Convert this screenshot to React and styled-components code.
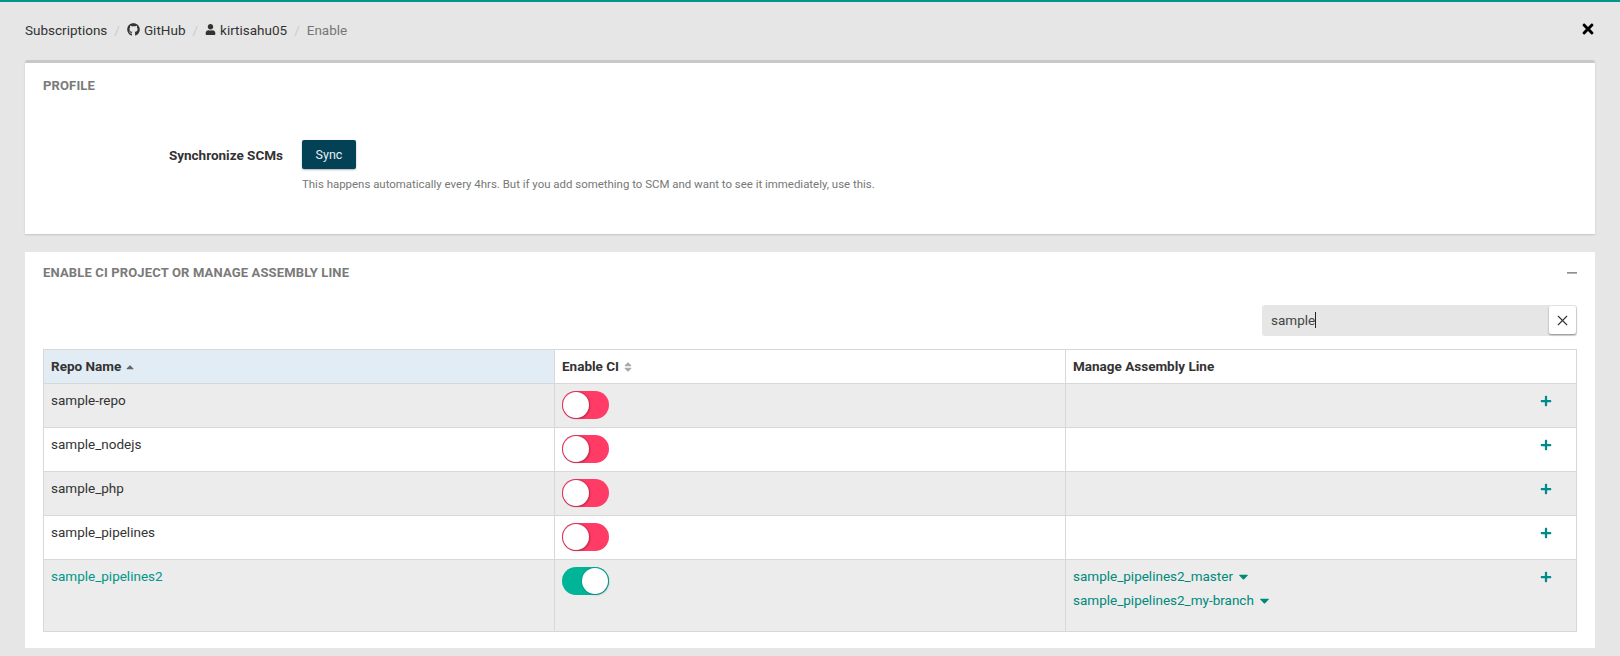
import React from 'react';
import styled, { createGlobalStyle } from 'styled-components';
import { FaGithub, FaUser, FaPlus, FaTimes, FaCaretDown, FaCaretUp, FaSort } from 'react-icons/fa';
import { X } from 'lucide-react';

const GlobalStyle = createGlobalStyle`
  html, body {
    margin: 0;
    padding: 0;
    background: #e6e6e6;
    font-family: Roboto, "Liberation Sans", sans-serif;
    font-size: 13.5px;
    color: #333;
    overflow: hidden;
  }
`;

const Page = styled.div`
  width: 1620px;
  height: 656px;
  box-sizing: border-box;
  border-top: 2px solid #009688;
  padding: 0 25px;
`;

const TopBar = styled.div`
  height: 58px;
  display: flex;
  align-items: center;
  justify-content: space-between;
  padding-bottom: 1px;
  box-sizing: border-box;
`;

const Crumbs = styled.div`
  display: flex;
  align-items: center;
  margin-top: -2px;
`;

const Crumb = styled.span`
  display: inline-flex;
  align-items: center;
  gap: 4px;
  color: ${p => (p.$current ? '#777' : '#333')};
`;

const Slash = styled.span`
  color: #ccc;
  padding: 0 7px;
`;

const GithubIcon = styled(FaGithub)`
  font-size: 13px;
`;

const UserIcon = styled(FaUser)`
  font-size: 11px;
`;

const CloseBtn = styled.span`
  display: flex;
  margin-right: -1px;
  margin-top: -4px;
  font-size: 16px;
  color: #000;
`;

const Card = styled.section`
  background: #fff;
  box-sizing: border-box;
  border-top: ${p => (p.$profile ? '3px solid #c8c8c8' : 'none')};
  border-radius: ${p => (p.$profile ? '3px 3px 0 0' : '0')};
  box-shadow: ${p => (p.$profile ? '0 1px 2px #00000026' : 'none')};
  padding: 0 18px;
  height: ${p => p.$height}px;
  margin-bottom: 18px;
`;

const CardHead = styled.div`
  height: 42px;
  box-sizing: border-box;
  padding-top: ${p => (p.$profile ? '3px' : '0')};
  padding-bottom: ${p => (p.$profile ? '0' : '2px')};
  display: flex;
  align-items: center;
  justify-content: space-between;
`;

const CardTitle = styled.h3`
  margin: 0;
  font-size: 13px;
  font-weight: 700;
  letter-spacing: 0.15px;
  text-transform: uppercase;
  color: #7a7a7a;
`;

const Collapse = styled.span`
  width: 10px;
  height: 1px;
  margin-top: 2px;
  background: #8f8f8f;
  border-bottom: 1px solid #b5b5b5;
`;

const FormRow = styled.div`
  display: grid;
  grid-template-columns: 240px 1fr;
  column-gap: 19px;
  padding-top: 35px;
`;

const FormLabel = styled.label`
  text-align: right;
  font-weight: 700;
  line-height: 31px;
  color: #333;
`;

const SyncButton = styled.button`
  display: block;
  width: 54px;
  height: 29px;
  padding: 0;
  border: none;
  border-radius: 2px;
  background: #024156;
  color: #e8eef0;
  font: 400 12.5px Roboto, sans-serif;
  box-shadow: 0 1px 2px #0000004d;
`;

const Help = styled.p`
  margin: 8px 0 0;
  font-size: 11.45px;
  line-height: 14px;
  color: #777;
`;

const SearchRow = styled.div`
  display: flex;
  justify-content: flex-end;
  margin-top: 11px;
  margin-bottom: 13px;
`;

const SearchBox = styled.div`
  position: relative;
  width: 315px;
  height: 31px;
  box-sizing: border-box;
  background: #e6e6e6;
  border-radius: 3px;
  padding: 0 9px 1px;
  display: flex;
  align-items: center;
  color: #444;
`;

const Caret = styled.span`
  width: 1px;
  height: 16px;
  background: #222;
`;

const ClearBtn = styled.span`
  position: absolute;
  top: 1px;
  right: 1px;
  width: 27px;
  height: 28px;
  background: #fff;
  border-radius: 2px;
  box-shadow: 0 1px 2px #00000066;
  display: flex;
  align-items: center;
  justify-content: center;
  color: #333;
`;

const Table = styled.table`
  width: 1533px;
  table-layout: fixed;
  border-collapse: collapse;
  border: 1.5px solid #d8d8d8;
`;

const Th = styled.th`
  height: 34px;
  box-sizing: border-box;
  padding: 0 7px 2px;
  text-align: left;
  font-weight: 700;
  font-size: 13.5px;
  color: #333;
  background: ${p => (p.$sorted ? '#e1ecf4' : '#fff')};
  border-left: 1.5px solid #d8d8d8;
  svg { font-size: 12px; margin-left: 3px; color: ${p => (p.$sorted ? '#666' : '#aaa')}; vertical-align: -2px; }
`;

const Tr = styled.tr`
  background: ${p => (p.$odd ? '#ececec' : '#fff')};
  border-top: 1.5px solid #d8d8d8;
`;

const Td = styled.td`
  height: ${p => p.$height}px;
  box-sizing: border-box;
  padding: 8px 7px 0;
  vertical-align: top;
  border-left: 1.5px solid #d8d8d8;
  color: ${p => (p.$enabled ? '#009688' : '#333')};
  line-height: 17px;
`;

const Toggle = styled.span`
  position: relative;
  display: block;
  width: 47px;
  height: 28px;
  margin-top: -1px;
  border-radius: 14px;
  background: ${p => (p.$on ? '#00b597' : '#ff3b66')};
  &::after {
    content: '';
    position: absolute;
    top: 1px;
    left: ${p => (p.$on ? '20px' : '1px')};
    width: 26px;
    height: 26px;
    border-radius: 50%;
    background: #fff;
    box-shadow: ${p => (p.$on ? '0 0 0 1px #00968899' : '0 0 0 1px #c2274b80')}, 1px 1px 2px #00000040;
  }
`;

const LineCell = styled.div`
  display: flex;
  justify-content: space-between;
  padding-right: 17px;
`;

const Lines = styled.div`
  display: flex;
  flex-direction: column;
  gap: 7px;
`;

const Line = styled.a`
  color: #00897b;
  display: inline-flex;
  align-items: center;
  gap: 3px;
  svg { font-size: 15px; }
`;

const AddIcon = styled(FaPlus)`
  color: #008a8c;
  font-size: 12px;
  margin-top: 3px;
`;

const repos = [
  { name: 'sample-repo' },
  { name: 'sample_nodejs' },
  { name: 'sample_php' },
  { name: 'sample_pipelines' },
  { name: 'sample_pipelines2', enabled: true, lines: ['sample_pipelines2_master', 'sample_pipelines2_my-branch'] },
];

export default function App() {
  return (
    <>
      <GlobalStyle />
      <Page>
        <TopBar>
          <Crumbs>
            <Crumb>Subscriptions</Crumb>
            <Slash>/</Slash>
            <Crumb><GithubIcon /> GitHub</Crumb>
            <Slash>/</Slash>
            <Crumb><UserIcon /> kirtisahu05</Crumb>
            <Slash>/</Slash>
            <Crumb $current>Enable</Crumb>
          </Crumbs>
          <CloseBtn><FaTimes /></CloseBtn>
        </TopBar>

        <Card $profile $height={174}>
          <CardHead $profile><CardTitle>Profile</CardTitle></CardHead>
          <FormRow>
            <FormLabel>Synchronize SCMs</FormLabel>
            <div>
              <SyncButton>Sync</SyncButton>
              <Help>This happens automatically every 4hrs. But if you add something to SCM and want to see it immediately, use this.</Help>
            </div>
          </FormRow>
        </Card>

        <Card $height={396}>
          <CardHead>
            <CardTitle>Enable CI project or manage assembly line</CardTitle>
            <Collapse />
          </CardHead>
          <SearchRow>
            <SearchBox>
              sample<Caret />
              <ClearBtn><X size={17} strokeWidth={1.6} /></ClearBtn>
            </SearchBox>
          </SearchRow>
          <Table>
            <colgroup>
              <col style={{ width: 511 }} />
              <col style={{ width: 511 }} />
              <col style={{ width: 511 }} />
            </colgroup>
            <thead>
              <tr>
                <Th $sorted>Repo Name<FaCaretUp /></Th>
                <Th>Enable CI<FaSort /></Th>
                <Th>Manage Assembly Line</Th>
              </tr>
            </thead>
            <tbody>
              {repos.map((repo, i) => (
                <Tr key={repo.name} $odd={i % 2 === 0}>
                  <Td $height={repo.lines ? 72 : 44} $enabled={repo.enabled}>{repo.name}</Td>
                  <Td $height={repo.lines ? 72 : 44}><Toggle $on={repo.enabled} /></Td>
                  <Td $height={repo.lines ? 72 : 44}>
                    <LineCell>
                      <Lines>
                        {(repo.lines || []).map(l => (
                          <Line key={l}>{l}<FaCaretDown /></Line>
                        ))}
                      </Lines>
                      <AddIcon />
                    </LineCell>
                  </Td>
                </Tr>
              ))}
            </tbody>
          </Table>
        </Card>
      </Page>
    </>
  );
}
